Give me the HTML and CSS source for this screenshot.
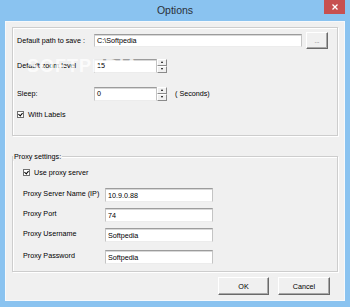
FILE: index.html
```html
<!DOCTYPE html>
<html lang="en">
<head>
  <meta charset="UTF-8">
  <title>Options</title>
  <link rel="stylesheet" href="styles.css">
</head>
<body>

  <div class="window">
    <div class="titlebar">
      <span></span>
      <span class="title">Options</span>
      <span class="close">
        <svg width="6" height="6" viewBox="0 0 6 6"><path d="M0.5 0.5L5.5 5.5M5.5 0.5L0.5 5.5" stroke="#fff" stroke-width="1.3"/></svg>
      </span>
    </div>

    <div class="client">
      <!-- General -->
      <div class="group general">
        <div class="row r1">
          <span class="lbl">Default path to save :</span>
          <div class="edit path">C:\Softpedia</div>
          <div class="btn browse">...</div>
        </div>
        <div class="row r2">
          <span class="lbl">Default zoom level</span>
          <div class="spin">
            <div class="edit num">15</div>
            <div class="arrows"><span class="up"></span><span class="down"></span></div>
          </div>
        </div>
        <div class="row r3">
          <span class="lbl">Sleep:</span>
          <div class="spin">
            <div class="edit num">0</div>
            <div class="arrows"><span class="up"></span><span class="down"></span></div>
          </div>
          <span class="unit">( Seconds)</span>
        </div>
        <div class="row r4">
          <span class="check"></span>
          <span>With Labels</span>
        </div>
        <div class="watermark">SOFTPEDIA</div>
      </div>

      <!-- Proxy -->
      <div class="group proxy">
        <span class="legend">Proxy settings:</span>
        <div class="row p1">
          <span class="check"></span>
          <span>Use proxy server</span>
        </div>
        <div class="row p2">
          <span class="lbl">Proxy Server Name (IP)</span>
          <div class="edit field">10.9.0.88</div>
        </div>
        <div class="row p3">
          <span class="lbl">Proxy Port</span>
          <div class="edit field">74</div>
        </div>
        <div class="row p3">
          <span class="lbl">Proxy Username</span>
          <div class="edit field">Softpedia</div>
        </div>
        <div class="row p5">
          <span class="lbl">Proxy Password</span>
          <div class="edit field">Softpedia</div>
        </div>
      </div>

      <div class="footer">
        <div class="btn ok">OK</div>
        <div class="btn cancel">Cancel</div>
      </div>
    </div>
  </div>

</body>
</html>
```

FILE: styles.css
```css
body {
  margin: 0;
  font-family: "Liberation Sans", Arial, sans-serif;
  font-size: 7.2px;
  color: #000;
}
.window {
  width: 350px;
  height: 307px;
  box-sizing: border-box;
  padding: 0 5px 6px;
  background-color: #8ac3f0;
  display: flex;
  flex-direction: column;
}
.titlebar {
  height: 21px;
  display: grid;
  grid-template-columns: 21px 1fr 21px;
}
.title {
  text-align: center;
  font-size: 10.5px;
  line-height: 21px;
  color: #2b3038;
}
.close {
  height: 14px;
  background-color: #c75050;
  display: flex;
  align-items: center;
  justify-content: center;
}
.client {
  flex: 1;
  background-color: #f0f0f0;
  display: flex;
  flex-direction: column;
  padding-top: 6px;
  box-shadow: inset 0 0 0 1px #f6f9fc;
}
.group {
  margin: 0 7px;
  box-sizing: border-box;
  border: 1px solid #cdcdcd;
  box-shadow: inset 1px 1px 0 #fff, 1px 1px 0 #fff;
  position: relative;
}
.general {
  height: 109px;
  padding: 4px 0 0 4px;
}
.proxy {
  height: 116px;
  margin-top: 20px;
  padding: 8px 0 0 10px;
}
.legend {
  position: absolute;
  top: -5px;
  left: 0;
  padding: 0 1px;
  line-height: 9px;
  background-color: #f0f0f0;
}
.row {
  display: flex;
  align-items: center;
  height: 17px;
}
.r2 { margin-top: 8px; }
.r3 { margin-top: 11px; }
.r4 { margin-top: 4px; }
.general .lbl {
  width: 77px;
}
.proxy .row {
  height: 14px;
}
.p2 { margin-top: 9px; }
.p3 { margin-top: 6px; }
.p5 { margin-top: 8px; }
.proxy .lbl {
  width: 82px;
  margin-top: -3px;
}
.edit {
  box-sizing: border-box;
  background-color: #fff;
  border: 1px solid;
  border-color: #9c9c9c #c4c4c4 #ececec #c4c4c4;
  box-shadow: inset 0 1px 0 #d8d8d8;
  padding-left: 2px;
  display: flex;
  align-items: center;
}
.path {
  width: 208px;
  height: 13px;
}
.spin {
  display: flex;
  height: 14px;
}
.num {
  width: 63px;
  height: 14px;
}
.arrows {
  width: 10px;
  display: flex;
  flex-direction: column;
}
.arrows span {
  flex: 1;
  box-sizing: border-box;
  background-color: #f0f0f0;
  border: 1px solid;
  border-color: #fff #8a8a8a #8a8a8a #fff;
  display: flex;
  align-items: center;
  justify-content: center;
}
.arrows span::after {
  content: "";
  border-left: 1.5px solid transparent;
  border-right: 1.5px solid transparent;
}
.arrows .up::after {
  border-bottom: 2px solid #000;
}
.arrows .down::after {
  border-top: 2px solid #000;
}
.unit {
  margin-left: 8px;
}
.field {
  width: 108px;
  height: 14px;
}
.btn {
  box-sizing: border-box;
  background-color: #f0f0f0;
  border: 1px solid;
  border-color: #fff #6a6a6a #6a6a6a #fff;
  box-shadow: inset -1px -1px 0 #a8a8a8;
  display: flex;
  align-items: center;
  justify-content: center;
}
.browse {
  width: 22px;
  height: 17px;
  margin-left: 4px;
  font-size: 6px;
  color: #444;
}
.check {
  width: 7px;
  height: 7px;
  box-sizing: border-box;
  border: 1px solid #6f6f6f;
  background-color: #fff;
  margin: 0 4px 0 0;
  position: relative;
}
.check::after {
  content: "";
  position: absolute;
  left: 1px;
  top: 0;
  width: 2px;
  height: 3px;
  border: solid #000;
  border-width: 0 1px 1px 0;
  transform: rotate(40deg);
}
.general .r4 .check {
  margin-right: 4px;
}
.footer {
  display: flex;
  justify-content: flex-end;
  gap: 9px;
  padding-right: 15px;
  margin-top: 5px;
}
.ok {
  width: 51px;
  height: 18px;
}
.cancel {
  width: 52px;
  height: 18px;
}
.watermark {
  position: absolute;
  left: 14px;
  top: 28px;
  font-size: 18px;
  font-weight: bold;
  letter-spacing: 1px;
  color: rgba(255, 255, 255, 0.8);
  pointer-events: none;
}
```
